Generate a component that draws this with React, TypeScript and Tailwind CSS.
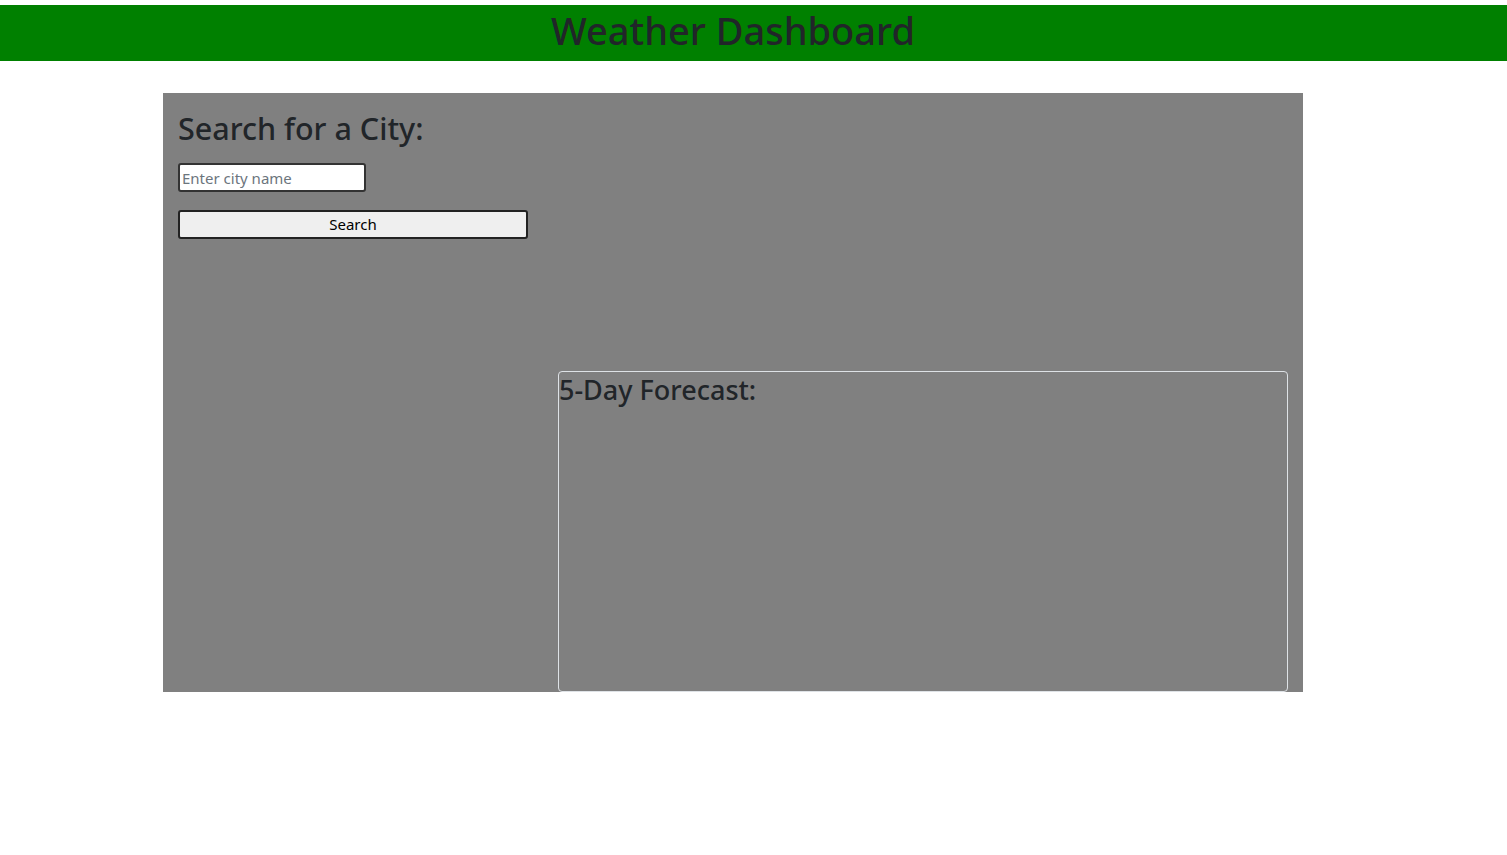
import React from "react";

const font = { fontFamily: '"Noto Sans", "Open Sans", sans-serif' };

export default function App() {
  return (
    <div className="min-h-[855px] bg-white text-[#212529]" style={font}>
      {/* Header */}
      <header className="mt-[5px] h-[56px] bg-[#008000] flex items-center">
        <h1 className="ml-[163px] w-[1140px] text-center text-[38px] font-medium leading-[46px] text-[#212529] -mt-[6px]">
          Weather Dashboard
        </h1>
      </header>

      {/* Main container */}
      <main className="w-[1140px] h-[599px] ml-[163px] mt-[32px] bg-[#808080] flex">
        {/* Search column */}
        <section className="w-[380px] px-[15px] pt-[16px]">
          <h2 className="text-[30.5px] font-medium leading-[38px] mb-[16px]">
            Search for a City:
          </h2>
          <input
            type="text"
            placeholder="Enter city name"
            className="block w-[188px] h-[29px] bg-white border-2 border-[#333] rounded-[3px] px-[2px] text-[15px] text-black placeholder:text-[#6c757d] outline-none"
          />
          <button className="mt-[18px] w-[350px] h-[29px] bg-[#efefef] border-2 border-[#222] rounded-[3px] text-[15px] text-black">
            Search
          </button>
        </section>

        {/* Weather column */}
        <section className="w-[760px] px-[15px] flex flex-col">
          <div className="h-[278px]" />
          <div className="flex-1 border border-[#dee2e6] rounded-[4px]">
            <h3 className="text-[27px] font-medium leading-[34px] mt-[1px]">
              5-Day Forecast:
            </h3>
          </div>
        </section>
      </main>
    </div>
  );
}
